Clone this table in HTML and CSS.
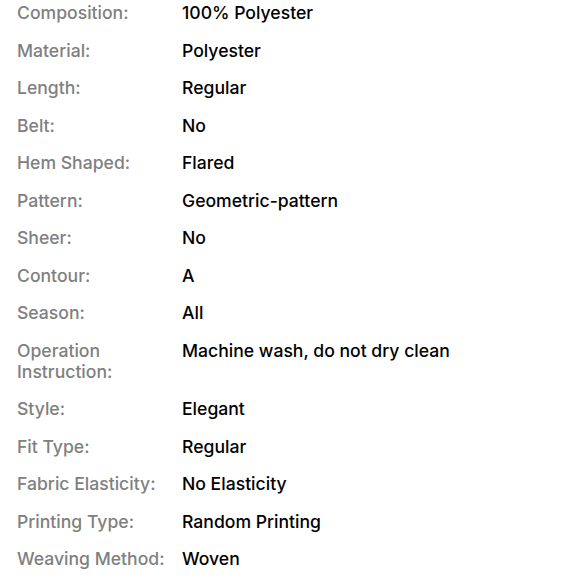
FILE: index.html
```html
<!DOCTYPE html>
<html>
<head>
<meta charset="utf-8">
<link rel="stylesheet" href="styles.css">
</head>
<body>
<dl class="specs">
  <dt>Composition:</dt><dd>100% Polyester</dd>
  <dt>Material:</dt><dd>Polyester</dd>
  <dt>Length:</dt><dd>Regular</dd>
  <dt>Belt:</dt><dd>No</dd>
  <dt>Hem Shaped:</dt><dd>Flared</dd>
  <dt>Pattern:</dt><dd>Geometric-pattern</dd>
  <dt>Sheer:</dt><dd>No</dd>
  <dt>Contour:</dt><dd>A</dd>
  <dt>Season:</dt><dd>All</dd>
  <dt>Operation Instruction:</dt><dd>Machine wash, do not dry clean</dd>
  <dt>Style:</dt><dd>Elegant</dd>
  <dt>Fit Type:</dt><dd>Regular</dd>
  <dt>Fabric Elasticity:</dt><dd>No Elasticity</dd>
  <dt>Printing Type:</dt><dd>Random Printing</dd>
  <dt>Weaving Method:</dt><dd>Woven</dd>
</dl>
</body>
</html>
```
FILE: styles.css
```css
html, body {
  margin: 0;
  padding: 0;
  background: #ffffff;
}
.specs {
  margin: 0;
  padding: 2px 0 0 17px;
  display: grid;
  grid-template-columns: 165px 1fr;
  row-gap: 16.5px;
  font-family: Inter, "Noto Sans", sans-serif;
  font-size: 17.6px;
  line-height: 21px;
}
.specs dt {
  color: #808080;
  font-weight: 500;
  padding-right: 10px;
}
.specs dd {
  margin: 0;
  color: #000000;
  font-weight: 500;
}
```
